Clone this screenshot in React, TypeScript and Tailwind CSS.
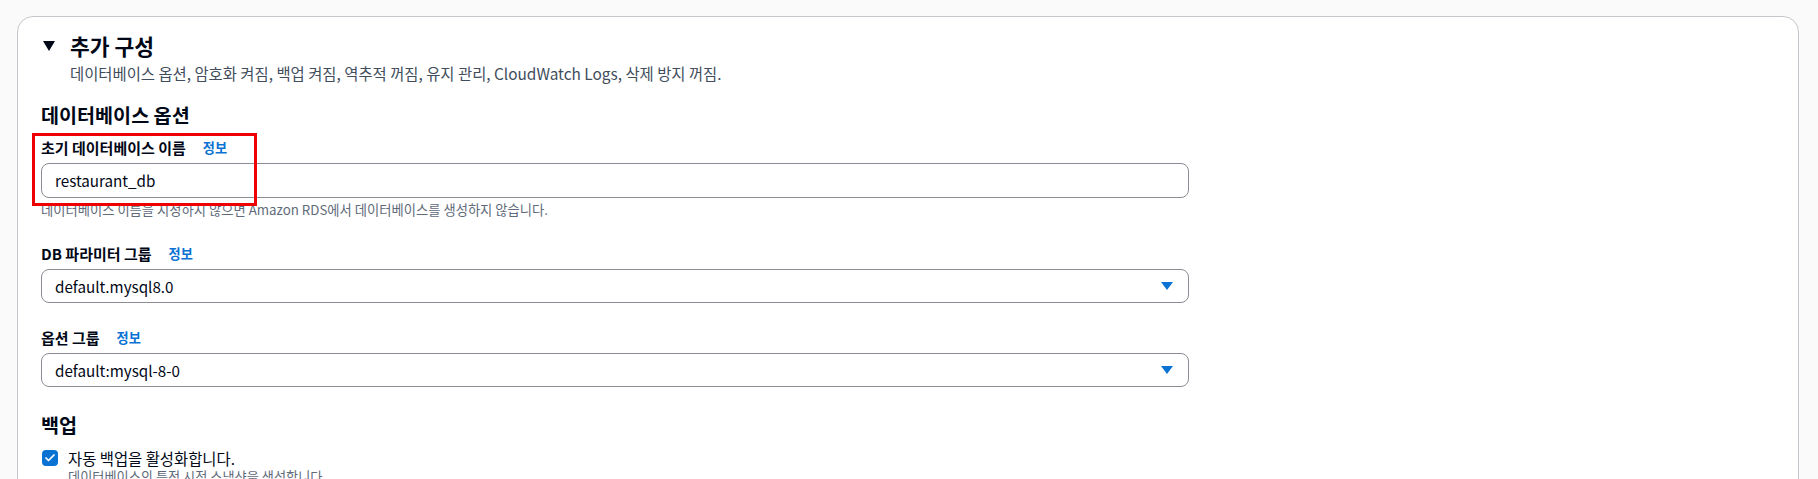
import { Check } from 'lucide-react'

const pageFont = "font-['Noto_Sans_CJK_KR','Noto_Sans',sans-serif]"

function InfoLink() {
  return <span className="ml-[17px] text-[13.2px] font-bold text-[#0972d3]">정보</span>
}

function SelectBox({ value }: { value: string }) {
  return (
    <div className="flex h-[34px] w-[1148px] items-center justify-between rounded-lg border border-[#8c8c94] bg-white pl-[13px] pr-[15px]">
      <span className="text-[15.2px] text-[#000716]">{value}</span>
      <svg width="12" height="8" viewBox="0 0 12 8">
        <polygon points="0,0 12,0 6,8" fill="#0972d3" />
      </svg>
    </div>
  )
}

export default function App() {
  return (
    <div className={`h-[479px] w-full overflow-hidden bg-[#fafafa] pl-[17px] pr-[19px] pt-[16px] ${pageFont}`}>
      <div className="h-[700px] rounded-2xl border border-[#c6c6cd] bg-white pl-[23px] pt-[15px]">
        {/* header */}
        <div className="flex h-[28px] items-center">
          <svg className="ml-[2px]" width="12" height="10" viewBox="0 0 12 10">
            <polygon points="0,0 12,0 6,10" fill="#000716" />
          </svg>
          <h2 className="ml-[15px] text-[21.5px] font-bold leading-[28px] text-[#000716]">추가 구성</h2>
        </div>
        <p className="mt-[3px] pl-[29px] text-[15.4px] leading-[20px] text-[#414d5c]">
          데이터베이스 옵션, 암호화 켜짐, 백업 켜짐, 역추적 꺼짐, 유지 관리, CloudWatch Logs, 삭제 방지 꺼짐.
        </p>

        <h3 className="mt-[21px] text-[19.6px] font-bold leading-[22px] text-[#000716]">데이터베이스 옵션</h3>

        <div className="relative mt-[12px]">
          <div className="absolute left-[-9px] top-[-5px] h-[73px] w-[225px] border-[3px] border-[#ee0000]" />
          <div className="flex items-center text-[15px] font-bold leading-[20px] text-[#000716]">
            초기 데이터베이스 이름
            <InfoLink />
          </div>
          <div className="mt-[5px] flex h-[35px] w-[1148px] items-center rounded-lg border border-[#8c8c94] bg-white pl-[13px]">
            <span className="text-[15.2px] text-[#000716]">restaurant_db</span>
          </div>
          <p className="mt-[4px] text-[13.3px] leading-[16px] text-[#5f6b7a]">
            데이터베이스 이름을 지정하지 않으면 Amazon RDS에서 데이터베이스를 생성하지 않습니다.
          </p>
        </div>

        <div className="mt-[26px]">
          <div className="flex items-center text-[15px] font-bold leading-[20px] text-[#000716]">
            DB 파라미터 그룹
            <InfoLink />
          </div>
          <div className="mt-[5px]">
            <SelectBox value="default.mysql8.0" />
          </div>
        </div>

        <div className="mt-[25px]">
          <div className="flex items-center text-[15px] font-bold leading-[20px] text-[#000716]">
            옵션 그룹
            <InfoLink />
          </div>
          <div className="mt-[5px]">
            <SelectBox value="default:mysql-8-0" />
          </div>
        </div>

        <h3 className="mt-[27px] text-[19.6px] font-bold leading-[22px] text-[#000716]">백업</h3>

        <div className="mt-[12px] flex items-start">
          <div className="mt-[2px] ml-[1px] flex h-[16px] w-[16px] items-center justify-center rounded-[4px] bg-[#0972d3]">
            <Check size={12} strokeWidth={3.5} color="#ffffff" />
          </div>
          <div className="ml-[10px]">
            <div className="text-[15.4px] leading-[20px] text-[#000716]">자동 백업을 활성화합니다.</div>
            <div className="mt-[1px] text-[13.2px] leading-[16px] text-[#5f6b7a]">
              데이터베이스의 특정 시점 스냅샷을 생성합니다.
            </div>
          </div>
        </div>
      </div>
    </div>
  )
}
